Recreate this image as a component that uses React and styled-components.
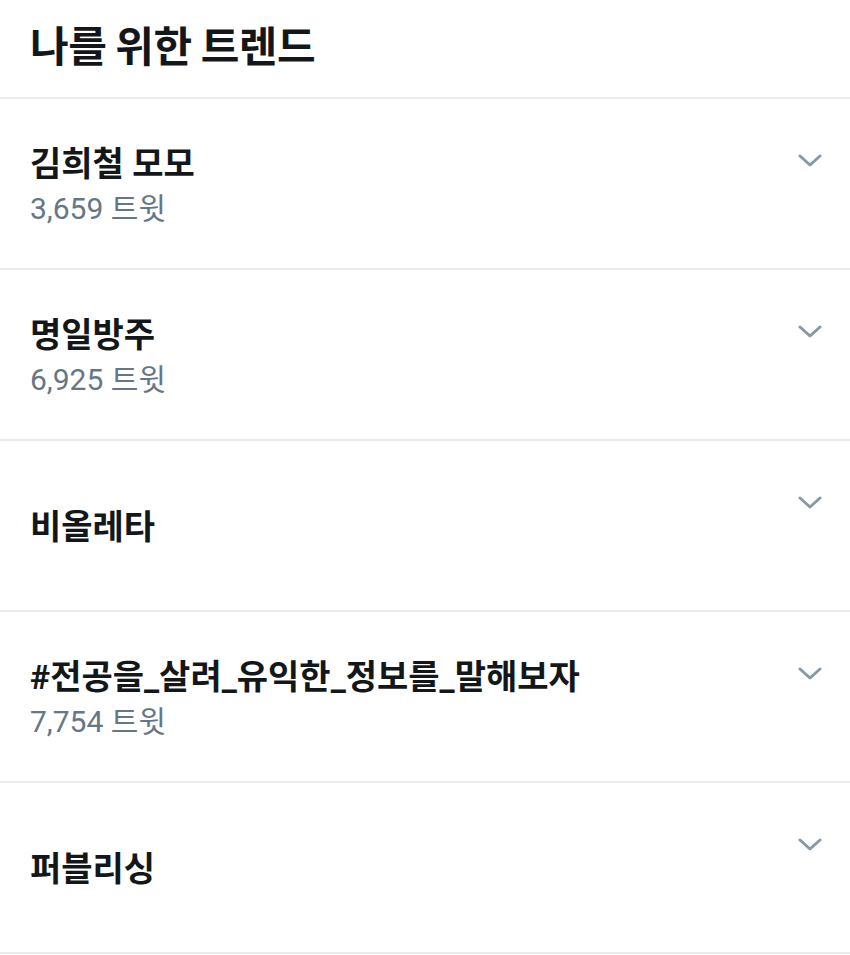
import React from 'react';
import styled, { createGlobalStyle } from 'styled-components';

const GlobalStyle = createGlobalStyle`
  html, body {
    margin: 0;
    padding: 0;
    background: #fff;
  }
  body {
    font-family: Roboto, "Noto Sans CJK KR", sans-serif;
    color: #14171a;
  }
`;

const trends = [
  { title: '김희철 모모', count: '3,659 트윗' },
  { title: '명일방주', count: '6,925 트윗' },
  { title: '비올레타' },
  { title: '#전공을_살려_유익한_정보를_말해보자', count: '7,754 트윗' },
  { title: '퍼블리싱' },
];

export default function App() {
  return (
    <Page>
      <GlobalStyle />
      <Header>
        <Title>나를 위한 트렌드</Title>
      </Header>
      <List>
        {trends.map((trend) => (
          <Row key={trend.title}>
            <TextBlock>
              <TrendTitle>{trend.title}</TrendTitle>
              {trend.count && <Count>{trend.count}</Count>}
            </TextBlock>
            <Chevron viewBox="0 0 24 14">
              <path d="M2 2 L12 11 L22 2" />
            </Chevron>
          </Row>
        ))}
      </List>
    </Page>
  );
}

const Page = styled.div`
  width: 850px;
  background: #fff;
`;

const Header = styled.div`
  height: 99px;
  display: flex;
  align-items: center;
  padding: 0 30px 10px;
  box-sizing: border-box;
  border-bottom: 2px solid #e6ecf0;
`;

const Title = styled.h1`
  margin: 0;
  font-family: "Noto Sans CJK KR", sans-serif;
  font-size: 42px;
  font-weight: 700;
  letter-spacing: -0.5px;
`;

const List = styled.div`
  display: flex;
  flex-direction: column;
`;

const Row = styled.div`
  height: 171px;
  box-sizing: border-box;
  border-bottom: 2px solid #e6ecf0;
  padding: 0 28px 0 30px;
  display: flex;
  align-items: center;
  justify-content: space-between;
`;

const TextBlock = styled.div`
  display: flex;
  flex-direction: column;
  gap: 2px;
  margin-top: 2px;
`;

const TrendTitle = styled.div`
  font-family: Roboto, "Noto Sans CJK KR", sans-serif;
  font-size: 34px;
  font-weight: 700;
  line-height: 46px;
`;

const Count = styled.div`
  font-family: Roboto, "Noto Sans CJK KR", sans-serif;
  font-size: 30px;
  color: #657786;
  line-height: 40px;
`;

const Chevron = styled.svg`
  width: 24px;
  height: 14px;
  align-self: flex-start;
  margin-top: 55px;
  fill: none;
  stroke: #8899a6;
  stroke-width: 3;
  stroke-linecap: round;
  stroke-linejoin: round;
`;
